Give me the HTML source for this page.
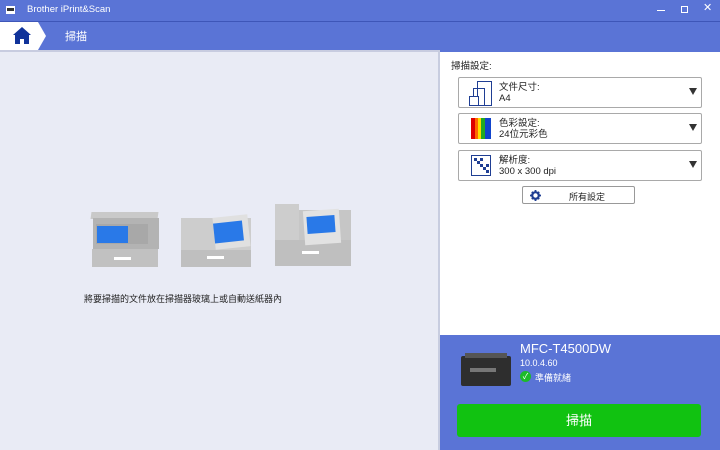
<!DOCTYPE html>
<html><head><meta charset="utf-8"><style>
*{margin:0;padding:0;box-sizing:border-box}
body{width:720px;height:450px;overflow:hidden;background:#5a74d6;font-family:"Liberation Sans","Noto Sans CJK TC",sans-serif;position:relative}
.a{position:absolute}
.dd{position:absolute;left:458px;width:244px;height:31px;background:#fff;border:1px solid #a9a9a9;border-radius:2px;font-size:9.5px;color:#222}
.dd .t{position:absolute;left:40px;top:4px;line-height:11px}
.dd .ar{position:absolute;right:4px;top:10px;width:0;height:0;border-left:4px solid transparent;border-right:4px solid transparent;border-top:7px solid #333}
.dev{position:absolute;background:#c4c4c4}
</style></head><body>
<div class="a" style="left:0;top:0;width:720px;height:20px;background:#5a74d6"></div>
<div class="a" style="left:6px;top:6px;width:9px;height:8px;background:#fff"><div style="margin:2px 1px;height:3px;background:#333"></div></div>
<div class="a" style="left:27px;top:4px;font-size:9.5px;color:#fff">Brother iPrint&amp;Scan</div>
<div class="a" style="left:657px;top:10px;width:8px;height:1px;background:#fff"></div>
<div class="a" style="left:681px;top:6px;width:7px;height:7px;border:1px solid #fff"></div>
<div class="a" style="left:703px;top:1px;font-size:11px;color:#fff">✕</div>
<div class="a" style="left:0;top:21px;width:720px;height:1px;background:#3e56b8"></div>
<svg class="a" style="left:0;top:22px" width="48" height="28"><polygon points="0,0 38,0 46,14 38,28 0,28" fill="#fff"/><path d="M13,13 L22,5 L31,13 L29,13 L29,22 L24,22 L24,17 L20,17 L20,22 L15,22 L15,13Z" fill="#10339a"/></svg>
<div class="a" style="left:65px;top:28px;font-size:11px;color:#fff">掃描</div>
<div class="a" style="left:0;top:50px;width:438px;height:400px;background:#e9ebf5;border-top:2px solid #c8cce0"></div>
<div class="a" style="left:438px;top:50px;width:2px;height:400px;background:#c8cde0"></div>
<div class="dev" style="left:91px;top:212px;width:67px;height:7px;background:#c9c9c9;transform:skewX(-8deg)"></div>
<div class="dev" style="left:93px;top:218px;width:66px;height:31px;background:#b3b3b3"></div>
<div class="dev" style="left:96px;top:224px;width:52px;height:20px;background:#a8a8a8"></div>
<div class="dev" style="left:97px;top:226px;width:31px;height:17px;background:#2979e8"></div>
<div class="dev" style="left:92px;top:249px;width:66px;height:18px;background:#c1c1c1"></div>
<div class="dev" style="left:114px;top:257px;width:17px;height:3px;background:#fff"></div>
<div class="dev" style="left:181px;top:218px;width:70px;height:32px;background:#cdcdcd"></div>
<div class="dev" style="left:181px;top:250px;width:70px;height:17px;background:#bfbfbf"></div>
<div class="dev" style="left:207px;top:256px;width:17px;height:3px;background:#fff"></div>
<div class="dev" style="left:214px;top:216px;width:35px;height:32px;background:#e0e0e0;transform:rotate(-6deg)"></div>
<div class="dev" style="left:214px;top:222px;width:29px;height:20px;background:#2979e8;transform:rotate(-6deg)"></div>
<div class="dev" style="left:275px;top:204px;width:24px;height:36px;background:#cdcdcd"></div>
<div class="dev" style="left:299px;top:210px;width:52px;height:30px;background:#c6c6c6"></div>
<div class="dev" style="left:275px;top:240px;width:76px;height:26px;background:#bfbfbf"></div>
<div class="dev" style="left:304px;top:210px;width:36px;height:34px;background:#e2e2e2;transform:rotate(-4deg)"></div>
<div class="dev" style="left:307px;top:216px;width:28px;height:17px;background:#2979e8;transform:rotate(-4deg)"></div>
<div class="dev" style="left:302px;top:251px;width:17px;height:3px;background:#fff"></div>
<div class="a" style="left:84px;top:292px;font-size:9px;color:#222">將要掃描的文件放在掃描器玻璃上或自動送紙器內</div>
<div class="a" style="left:440px;top:52px;width:280px;height:283px;background:#fff"></div>
<div class="a" style="left:451px;top:58px;font-size:9.5px;color:#222">掃描設定:</div>
<div class="dd" style="top:77px"><svg class="a" style="left:10px;top:3px" width="24" height="26"><rect x="8.5" y="0.5" width="14" height="24" fill="none" stroke="#1f3e93"/><rect x="4.5" y="7.5" width="11" height="17" fill="none" stroke="#1f3e93"/><rect x="0.5" y="15.5" width="9" height="9" fill="#fff" stroke="#1f3e93"/></svg><div class="t">文件尺寸:<br>A4</div><div class="ar"></div></div>
<div class="dd" style="top:113px"><svg class="a" style="left:12px;top:4px" width="20" height="21"><rect x="0" width="4" height="21" fill="#d00"/><rect x="4" width="3" height="21" fill="#f60"/><rect x="7" width="3" height="21" fill="#fd0"/><rect x="10" width="4" height="21" fill="#2a2"/><rect x="14" width="6" height="21" fill="#14c"/></svg><div class="t">色彩設定:<br>24位元彩色</div><div class="ar"></div></div>
<div class="dd" style="top:150px"><svg class="a" style="left:12px;top:4px" width="20" height="21"><rect x="0.5" y="0.5" width="19" height="20" fill="#fff" stroke="#1f3e93"/><path d="M3 3h3v3h3v3h3v3h3v3h3v3h-3v-3h-3v-3h-3v-3h-3v-3h-3z M9 3h3v3h-3z M15 9h3v3h-3z" fill="#1f3e93"/></svg><div class="t">解析度:<br>300 x 300 dpi</div><div class="ar"></div></div>
<div class="a" style="left:522px;top:186px;width:113px;height:18px;border:1px solid #999;border-radius:2px;background:#fff;font-size:9px;color:#222"><svg class="a" style="left:7px;top:3px" width="11" height="11" viewBox="0 0 12 12"><circle cx="6" cy="6" r="3.6" fill="none" stroke="#1f3e93" stroke-width="2.4"/><path d="M5 0h2v2h-2zM5 10h2v2h-2zM0 5h2v2h-2zM10 5h2v2h-2zM1.3 2.7l1.4-1.4 1.4 1.4-1.4 1.4zM7.9 9.3l1.4-1.4 1.4 1.4-1.4 1.4zM9.3 1.3l1.4 1.4-1.4 1.4-1.4-1.4zM2.7 7.9l1.4 1.4-1.4 1.4-1.4-1.4z" fill="#1f3e93"/></svg><span style="position:absolute;left:46px;top:3px">所有設定</span></div>
<div class="a" style="left:461px;top:356px;width:50px;height:30px;background:#2e2e2e;border-radius:2px"></div>
<div class="a" style="left:465px;top:353px;width:42px;height:5px;background:#555"></div>
<div class="a" style="left:470px;top:368px;width:26px;height:4px;background:#777"></div>
<div class="a" style="left:520px;top:341px;font-size:13px;color:#fff">MFC-T4500DW</div>
<div class="a" style="left:520px;top:358px;font-size:9px;color:#fff">10.0.4.60</div>
<div class="a" style="left:520px;top:371px;width:11px;height:11px;border-radius:50%;background:#1cbb2a;color:#fff;font-size:8px;text-align:center;line-height:11px">✓</div>
<div class="a" style="left:535px;top:371px;font-size:9px;color:#fff">準備就緒</div>
<div class="a" style="left:457px;top:404px;width:244px;height:33px;background:#11c211;border-radius:3px;color:#fff;font-size:13px;text-align:center;line-height:33px">掃描</div>
</body></html>
